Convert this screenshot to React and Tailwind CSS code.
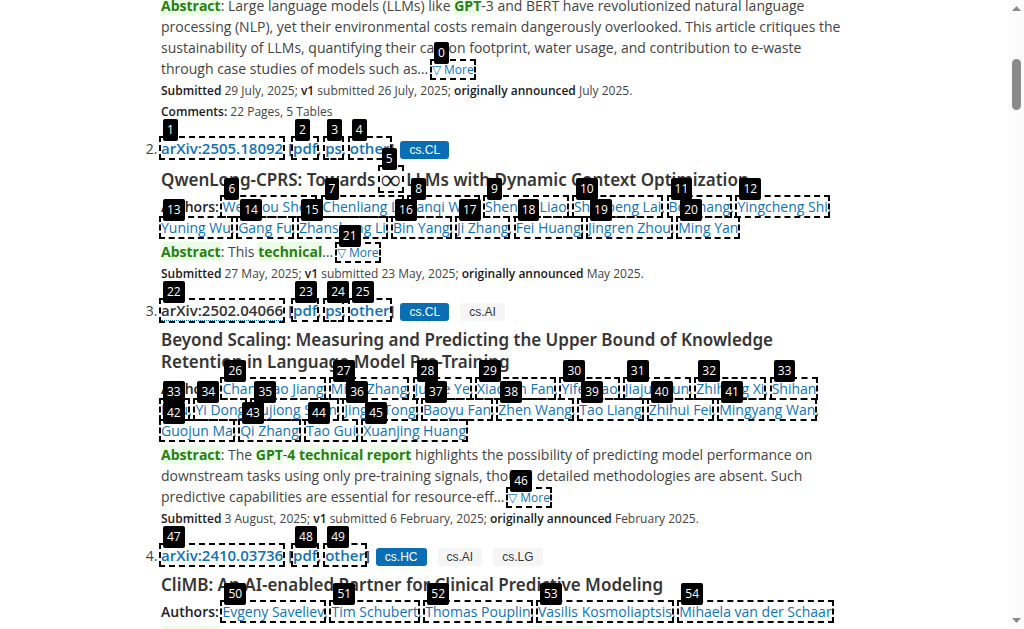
import React from "react";

function Badge({ n }) {
  return (
    <span className="pointer-events-none absolute -top-[19px] left-[2px] z-20 rounded-xs bg-black px-1 py-[2px] text-[12px] leading-[18px] font-normal whitespace-nowrap text-white">
      {n}
    </span>
  );
}

const MARK = "relative outline-2 outline-dashed outline-black";

function Hint({ n, children, className = "" }) {
  return (
    <a href="#" className={`${MARK} text-[#0f73b8] ${className}`}>
      {children}
      <Badge n={n} />
    </a>
  );
}

function SplitHint({ n, parts }) {
  return (
    <a href="#" className="text-[#0f73b8]">
      {parts.map((part, i) => (
        <React.Fragment key={part}>
          {i > 0 && " "}
          <span className={MARK}>
            {part}
            <Badge n={n} />
          </span>
        </React.Fragment>
      ))}
    </a>
  );
}

function Hit({ children }) {
  return <span className="bg-[#ebffe6] font-bold text-[#297d17]">{children}</span>;
}

function More({ n }) {
  return (
    <Hint n={n} className="text-[12px] whitespace-nowrap">
      ▽ More
    </Hint>
  );
}

function Head({ id, idHint, formats, tags, hovered = false }) {
  return (
    <div className="leading-[24px]">
      <span className="text-[15px] leading-[20px] font-semibold">
        <Hint n={idHint} className={hovered ? "border-b border-dotted border-[#0f73b8] text-[#333]!" : ""}>
          {id}
        </Hint>
        <span className="ml-[5px]">
          [
          {formats.map(([label, n], i) => (
            <React.Fragment key={label}>
              {i > 0 && ", "}
              <Hint n={n}>{label}</Hint>
            </React.Fragment>
          ))}
          ]
        </span>
      </span>
      <span className="ml-[6px] inline-flex gap-[11px] align-middle font-['Liberation_Sans',sans-serif] text-[12px] leading-[18px]">
        {tags.map((tag, i) => (
          <span
            key={tag}
            className={`rounded-[3px] px-[9px] ${i === 0 ? "bg-[#0a6eb4] text-white" : "bg-[#f5f5f5] text-[#363636]"}`}
          >
            {tag}
          </span>
        ))}
      </span>
    </div>
  );
}

function Title({ children }) {
  return <p className="mt-[6px] font-['Noto_Sans',sans-serif] text-[17px] leading-[22px] font-semibold text-[#363636]">{children}</p>;
}

function Authors({ list }) {
  return (
    <p className="mt-[5px] leading-[21px]">
      <span className="font-semibold text-[#222]">Authors:</span>{" "}
      {list.map(([name, n], i) => (
        <React.Fragment key={n}>
          {i > 0 && ", "}
          {Array.isArray(name) ? <SplitHint n={n} parts={name} /> : <Hint n={n}>{name}</Hint>}
        </React.Fragment>
      ))}
    </p>
  );
}

function Abstract({ children }) {
  return (
    <p className="mt-[3px] leading-[21px]">
      <Hit>Abstract</Hit>: {children}
    </p>
  );
}

function Strong({ children }) {
  return <span className="font-semibold text-[#1a1a1a]">{children}</span>;
}

function Dates({ submitted, v1, announced }) {
  return (
    <p className="text-[12px] leading-[21px]">
      <Strong>Submitted</Strong> {submitted}; <Strong>v1</Strong> submitted {v1};{" "}
      <Strong>originally announced</Strong> {announced}.
    </p>
  );
}

const QWEN = [
  ["Weizhou Shen", 6], ["Chenliang Li", 7], ["Fanqi Wan", 8], ["Shengyi Liao", 9],
  ["Shaopeng Lai", 10], ["Bo Zhang", 11], ["Yingcheng Shi", 12], ["Yuning Wu", 13],
  ["Gang Fu", 14], ["Zhansheng Li", 15], ["Bin Yang", 16], ["Ji Zhang", 17],
  ["Fei Huang", 18], ["Jingren Zhou", 19], ["Ming Yan", 20],
];

const SCALING = [
  ["Changhao Jiang", 26], ["Ming Zhang", 27], ["Junjie Ye", 28], ["Xiaoran Fan", 29],
  ["Yifei Cao", 30], ["Jiajun Sun", 31], ["Zhiheng Xi", 32], [["Shihan", "Dou"], 33],
  ["Yi Dong", 34], ["Yujiong Shen", 35], ["Jingqi Tong", 36], ["Baoyu Fan", 37],
  ["Zhen Wang", 38], ["Tao Liang", 39], ["Zhihui Fei", 40], ["Mingyang Wan", 41],
  ["Guojun Ma", 42], ["Qi Zhang", 43], ["Tao Gui", 44], ["Xuanjing Huang", 45],
];

const CLIMB = [
  ["Evgeny Saveliev", 50], ["Tim Schubert", 51], ["Thomas Pouplin", 52],
  ["Vasilis Kosmoliaptsis", 53], ["Mihaela van der Schaar", 54],
];

function Scrollbar() {
  return (
    <div aria-hidden="true" className="flex w-[15px] shrink-0 flex-col items-center bg-[#fbfbfb] py-[6px]">
      <svg width="9" height="5" viewBox="0 0 9 5" fill="#8b8b8b"><path d="M4.5 0 9 5H0z" /></svg>
      <div className="mt-[48px] h-[51px] w-[9px] rounded-full bg-[#8b8b8b]" />
      <svg className="mt-auto" width="9" height="5" viewBox="0 0 9 5" fill="#8b8b8b"><path d="M0 0h9L4.5 5z" /></svg>
    </div>
  );
}

export default function App() {
  return (
    <div className="flex h-screen overflow-hidden bg-white font-['Open_Sans',sans-serif] text-[14px] text-[#444]">
      <main className="min-w-0 flex-1 overflow-hidden">
        <ol className="mx-auto -mt-[8px] flex max-w-[687px] list-decimal flex-col gap-[15px]">
          <li className="list-none">
            <Abstract>
              Large language models (LLMs) like <Hit>GPT</Hit>-3 and BERT have revolutionized natural
              language processing (NLP), yet their environmental costs remain dangerously overlooked.
              This article critiques the sustainability of LLMs, quantifying their carbon footprint,
              water usage, and contribution to e-waste through case studies of models such as…{" "}
              <More n={0} />
            </Abstract>
            <Dates submitted="29 July, 2025" v1="26 July, 2025" announced="July 2025" />
            <p className="text-[12px] leading-[21px]">
              <Strong>Comments:</Strong> 22 Pages, 5 Tables
            </p>
          </li>
          <li value={2}>
            <Head
              id="arXiv:2505.18092"
              idHint={1}
              formats={[["pdf", 2], ["ps", 3], ["other", 4]]}
              tags={["cs.CL"]}
            />
            <Title>
              QwenLong-CPRS: Towards{" "}
              <span className={`${MARK} inline-block px-px align-[-3px] font-['Liberation_Serif',serif] text-[28px] leading-[23px] font-normal text-[#222]`}>
                ∞<span className="font-['Open_Sans',sans-serif]"><Badge n={5} /></span>
              </span>{" "}
              LLMs with Dynamic Context Optimization
            </Title>
            <Authors list={QWEN} />
            <Abstract>
              This <Hit>technical</Hit>… <More n={21} />
            </Abstract>
            <Dates submitted="27 May, 2025" v1="23 May, 2025" announced="May 2025" />
          </li>
          <li value={3}>
            <Head
              id="arXiv:2502.04066"
              idHint={22}
              formats={[["pdf", 23], ["ps", 24], ["other", 25]]}
              tags={["cs.CL", "cs.AI"]}
              hovered
            />
            <Title>
              Beyond Scaling: Measuring and Predicting the Upper Bound of Knowledge Retention in
              Language Model Pre-Training
            </Title>
            <Authors list={SCALING} />
            <Abstract>
              The <Hit>GPT</Hit>-<Hit>4</Hit> <Hit>technical</Hit> <Hit>report</Hit> highlights the
              possibility of predicting model performance on downstream tasks using only pre-training
              signals, though detailed methodologies are absent. Such predictive capabilities are
              essential for resource-eff… <More n={46} />
            </Abstract>
            <Dates submitted="3 August, 2025" v1="6 February, 2025" announced="February 2025" />
          </li>
          <li value={4}>
            <Head
              id="arXiv:2410.03736"
              idHint={47}
              formats={[["pdf", 48], ["other", 49]]}
              tags={["cs.HC", "cs.AI", "cs.LG"]}
            />
            <Title>CliMB: An AI-enabled Partner for Clinical Predictive Modeling</Title>
            <Authors list={CLIMB} />
            <Abstract>
              Despite its significant promise and continuous <Hit>technical</Hit> advances, real-world
              applications of artificial intelligence
            </Abstract>
          </li>
        </ol>
      </main>
      <Scrollbar />
    </div>
  );
}
